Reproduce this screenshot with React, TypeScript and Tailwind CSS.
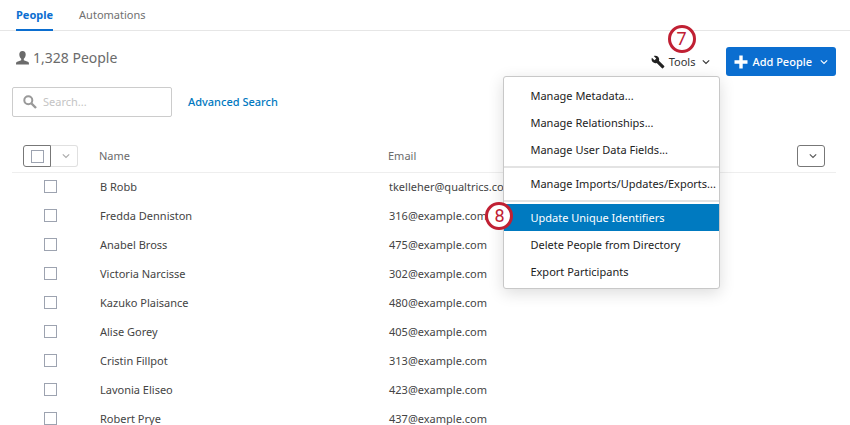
import React from 'react';

const people = [
  { name: 'B Robb', email: 'tkelleher@qualtrics.com' },
  { name: 'Fredda Denniston', email: '316@example.com' },
  { name: 'Anabel Bross', email: '475@example.com' },
  { name: 'Victoria Narcisse', email: '302@example.com' },
  { name: 'Kazuko Plaisance', email: '480@example.com' },
  { name: 'Alise Gorey', email: '405@example.com' },
  { name: 'Cristin Fillpot', email: '313@example.com' },
  { name: 'Lavonia Eliseo', email: '423@example.com' },
  { name: 'Robert Prye', email: '437@example.com' },
];

const Chevron: React.FC<{ className?: string }> = ({ className }) => (
  <svg viewBox="0 0 8 8" className={className} fill="none" stroke="currentColor" strokeWidth="1.1" aria-hidden="true">
    <path d="M.8 2.3 4 5.5 7.200 2.3" />
  </svg>
);

const Callout: React.FC<{ children: React.ReactNode; className: string }> = ({ children, className }) => (
  <span
    className={`absolute flex size-7 items-center justify-center rounded-full border-[3px] border-[#c02033] bg-white font-[Roboto,sans-serif] text-lg leading-none text-[#c02033] ${className}`}
  >
    {children}
  </span>
);

const MenuItem: React.FC<{ children: React.ReactNode; active?: boolean }> = ({ children, active }) => (
  <button
    type="button"
    role="menuitem"
    className={`block h-[27px] w-full pl-[26px] text-left whitespace-nowrap ${active ? 'bg-[#007ac0] text-white' : 'text-[#222]'}`}
  >
    {children}
  </button>
);

const Divider: React.FC = () => <div role="separator" className="mt-[3px] mb-0.5 h-[2px] bg-[#e3e3e3]" />;

const ToolsMenu: React.FC = () => (
  <div
    role="menu"
    className="absolute top-full -right-2.5 z-10 w-[217px] rounded-[3px] border border-[#c8c8c8] bg-white pt-[5px] pb-[3px] shadow-[0_4px_16px_rgba(0,0,0,0.14)]"
  >
    <MenuItem>Manage Metadata...</MenuItem>
    <MenuItem>Manage Relationships...</MenuItem>
    <MenuItem>Manage User Data Fields...</MenuItem>
    <Divider />
    <MenuItem>Manage Imports/Updates/Exports...</MenuItem>
    <Divider />
    <div className="relative">
      <MenuItem active>Update Unique Identifiers</MenuItem>
      <Callout className="-top-0.5 -left-[19px]">8</Callout>
    </div>
    <MenuItem>Delete People from Directory</MenuItem>
    <MenuItem>Export Participants</MenuItem>
  </div>
);

const App: React.FC = () => {
  return (
    <div className="h-screen overflow-hidden bg-white font-['Noto_Sans',sans-serif] text-[11px] leading-4 text-[#444]">
      {/* Tabs */}
      <nav className="flex h-[31px] gap-[26px] border-b border-[#e6e6e6] px-4">
        <a href="#people" className="-mb-px border-b-2 border-[#0b6ed0] pt-[7px] font-bold text-[#0b6ed0]">People</a>
        <a href="#automations" className="pt-[7px] text-[#707070]">Automations</a>
      </nav>

      <main className="pr-3.5 pl-3">
        {/* Title and actions */}
        <div className="flex items-start justify-between pt-4">
          <h1 className="flex items-center gap-1 pt-px pl-1 text-sm leading-5 text-[#6b6b6b]">
            <svg viewBox="0 0 13 14" className="h-3.5 w-[13px]" fill="currentColor" aria-hidden="true">
              <path d="M6.5 0C4.3 0 3.2 1.5 3.3 3.6c0 1.8.8 3.3 1.9 4.2v1.4L1.2 10.7C.3 11.1 0 11.7 0 13.4h13c0-1.7-.3-2.3-1.2-2.7L7.8 9.2V7.8c1.1-.9 1.9-2.4 1.9-4.2C9.8 1.5 8.7 0 6.5 0Z" />
            </svg>
            1,328 People
          </h1>

          <div className="flex items-center gap-4">
            <div className="relative">
              <button type="button" className="flex h-[29px] items-center text-[#333]">
                <svg viewBox="0 0 24 24" className="mr-1 size-3.5 text-[#222]" fill="currentColor" aria-hidden="true">
                  <path d="m22.7 19-9.1-9.1c.9-2.3.4-5-1.5-6.9-2-2-5-2.4-7.4-1.3L9 6 6 9 1.6 4.7C.4 7.1.9 10.1 2.9 12.1c1.9 1.9 4.6 2.4 6.9 1.5l9.1 9.1c.4.4 1 .4 1.4 0l2.3-2.3c.5-.4.5-1.1.1-1.4Z" />
                </svg>
                Tools
                <Chevron className="ml-[7px] size-2" />
              </button>
              <Callout className="-top-[22px] left-[17px]">7</Callout>
              <ToolsMenu />
            </div>
            <button type="button" className="flex h-[29px] items-center rounded-[3px] bg-[#0b6ed0] px-2 font-medium text-white">
              <svg viewBox="0 0 14 14" className="mr-1 size-3.5" fill="currentColor" aria-hidden="true">
                <path d="M5.3.5h3.4v4.8h4.8v3.4H8.7v4.8H5.3V8.7H.5V5.3h4.8Z" />
              </svg>
              Add People
              <Chevron className="ml-2 size-2" />
            </button>
          </div>
        </div>

        {/* Search */}
        <div className="flex items-center gap-4 pt-[11px]">
          <label className="flex h-[30px] w-[160px] items-center rounded-[2px] border border-[#ccc] pl-2.5">
            <svg viewBox="0 0 14 14" className="mr-1.5 size-3.5 shrink-0 text-[#999]" fill="none" stroke="currentColor" aria-hidden="true">
              <circle cx="5.3" cy="5.3" r="4" strokeWidth="2" />
              <path d="m8.5 8.5 4.5 4.5" strokeWidth="2.4" />
            </svg>
            <input type="text" aria-label="Search" placeholder="Search..." className="w-full min-w-0 outline-none placeholder:text-[#c4c4c4]" />
          </label>
          <a href="#advanced-search" className="font-medium text-[#0078c0]">Advanced Search</a>
        </div>

        {/* People table */}
        <table className="mt-6 w-full table-fixed text-left">
          <thead>
            <tr className="h-[31px] border-b border-[#eee] text-[#6b6b6b]">
              <th className="w-[76px] pl-[11px]">
                <div className="flex h-[22px] w-[55px]">
                  <span className="flex w-7 items-center justify-center rounded-l-[3px] border border-[#777]">
                    <input type="checkbox" aria-label="Select all people" className="block size-[13px] appearance-none border border-[#9da3b0] bg-white" />
                  </span>
                  <button type="button" aria-label="Selection options" className="flex flex-1 items-center justify-center rounded-r-[3px] border border-l-0 border-[#e0e0e0] pl-1 text-[#aaa]">
                    <Chevron className="size-2" />
                  </button>
                </div>
              </th>
              <th className="w-[288px] pl-[11px] font-normal">Name</th>
              <th className="pl-3 font-normal">Email</th>
              <th className="w-[104px] pr-[11px]">
                <button type="button" aria-label="Choose columns" className="ml-auto flex h-[22px] w-7 items-center justify-center rounded-[3px] border border-[#777] pl-1 text-[#555]">
                  <Chevron className="size-2" />
                </button>
              </th>
            </tr>
          </thead>
          <tbody>
            {people.map((person) => (
              <tr key={person.email} className="h-[29px]">
                <td className="pl-8">
                  <input type="checkbox" aria-label={`Select ${person.name}`} className="block size-[13px] appearance-none border border-[#9da3b0] bg-white" />
                </td>
                <td className="pl-3">{person.name}</td>
                <td className="pl-[13px]">{person.email}</td>
                <td></td>
              </tr>
            ))}
          </tbody>
        </table>
      </main>
    </div>
  );
};

export default App;
